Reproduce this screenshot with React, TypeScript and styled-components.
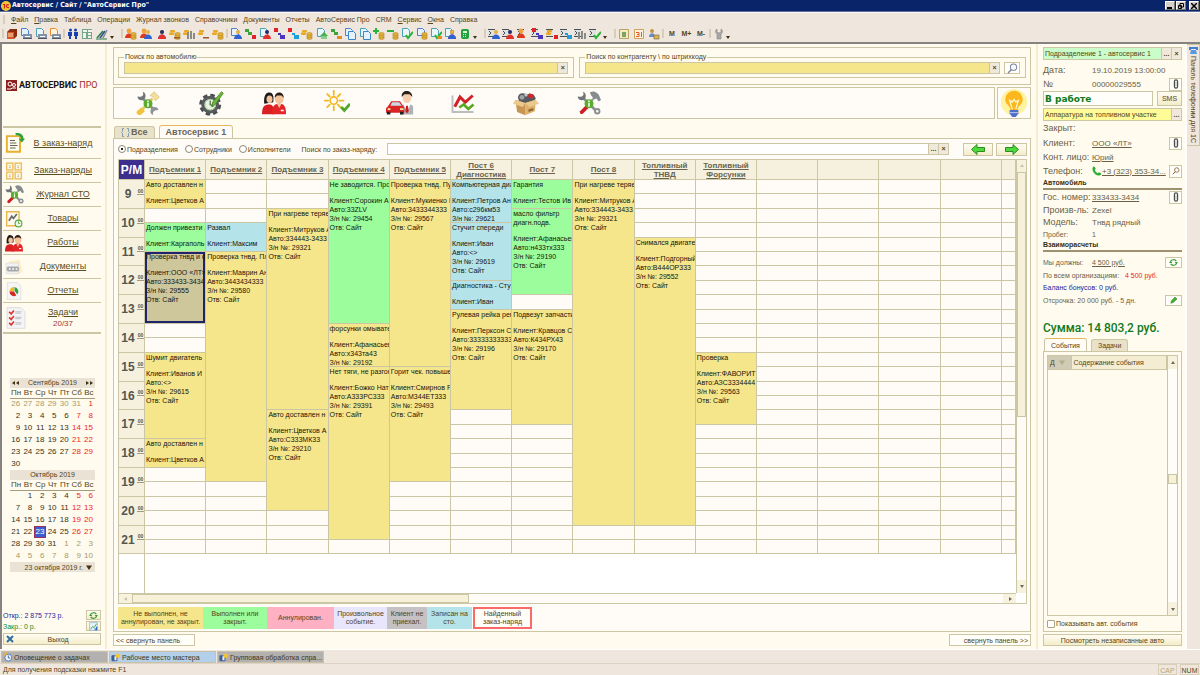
import React from "react";
import styled, { createGlobalStyle, css } from "styled-components";

const c = {
  page: "#fffbee",
  panel: "#fffcf7",
  chrome: "#efe6dd",
  line: "#cbc6a3",
  text: "#544417",
  soft: "#6b5f45",
  yellow: "#f6e68b",
  green: "#9bfd9b",
  blue: "#b4e3e9",
};

const GlobalStyle = createGlobalStyle`
  * { box-sizing: border-box; }
  body { margin: 0; font: 7px/9px "Liberation Sans", Arial, sans-serif; color: ${c.text}; background: ${c.chrome}; }
  button, input { font: inherit; color: inherit; margin: 0; padding: 0; border-radius: 0; }
  button { cursor: pointer; white-space: nowrap; }
  a { color: inherit; }
  svg { display: block; flex: none; }
`;

/* ---------- shell ---------- */

const Shell = styled.div`
  min-height: 100vh;
  display: flex;
  flex-direction: column;
`;

const TitleBar = styled.header`
  height: 12px;
  flex: none;
  display: flex;
  align-items: center;
  gap: 1px;
  padding: 0 1px;
  background: #0a246a;
  border-bottom: 1px solid #5f6f9c;
  color: #fff;
  font: bold 7px/9px "DejaVu Sans Condensed", "DejaVu Sans", sans-serif;
`;

const TitleText = styled.h1`
  margin: 0;
  flex: 1;
  font: inherit;
`;

const WindowButton = styled.button`
  width: 10px;
  height: 9px;
  border: 1px solid #fff;
  border-right-color: #777;
  border-bottom-color: #777;
  background: #d6d0c8;
  display: grid;
  place-items: center;
  &:last-child { margin-left: 2px; }
`;

const MenuBar = styled.nav`
  flex: none;
  height: 13px;
  display: flex;
  align-items: center;
  gap: 6px;
  padding: 1px 3px 0;
  border-top: 1px solid #fbf7f3;
`;

const MenuItem = styled.button`
  border: 0;
  background: none;
  line-height: 10px;
`;

const Grip = styled.span<{ $wide?: boolean }>`
  width: 2px;
  height: 9px;
  margin-left: ${(p) => (p.$wide ? 3 : 0)}px;
  background: #d8cdb8;
  flex: none;
`;

const ToolBar = styled.div`
  flex: none;
  height: 19px;
  display: flex;
  align-items: center;
  gap: 2px;
  padding: 0 2px;
  border-bottom: 2px solid #85827f;
`;

const ToolGroup = styled.div<{ $w: number }>`
  width: ${(p) => p.$w}px;
  flex: none;
  display: flex;
  align-items: center;
  justify-content: space-between;
  font-weight: bold;
`;

const ToolButton = styled.button`
  border: 0;
  background: none;
  min-width: 12px;
  height: 12px;
`;

const MoreButton = styled.button`
  border: 0;
  background: none;
  width: 6px;
  height: 10px;
  display: flex;
  align-items: flex-end;
`;

const Body = styled.div`
  flex: 1;
  display: flex;
  border-left: 2px solid #85827f;
`;

const Work = styled.div`
  flex: 1;
  min-width: 0;
  display: grid;
  grid-template-columns: 104px minmax(0, 1fr) 149px;
  background: ${c.page};
  border-right: 2px solid #fff;
`;

/* ---------- left column ---------- */

const Side = styled.aside`
  display: flex;
  flex-direction: column;
  padding: 0 4px 4px 1px;
  border-right: 1px solid #f3ecd2;
`;

const Logo = styled.div`
  height: 84px;
  display: flex;
  align-items: center;
  gap: 2px;
  padding-left: 3px;
  border-bottom: 2px solid ${c.line};
  font: bold 9px/14px Roboto, "Liberation Sans", sans-serif;
  white-space: nowrap;
  color: #1b1414;
`;

const LogoAccent = styled.span`
  font-weight: normal;
  color: #a12a2a;
`;

const NavItem = styled.a<{ $tall?: boolean }>`
  height: ${(p) => (p.$tall ? 31 : 24)}px;
  display: grid;
  grid-template-columns: 22px 1fr;
  align-items: center;
  padding-left: 2px;
  padding-right: 2px;
  border-bottom: 1px solid ${c.line};
  font-size: 9px;
  line-height: 11px;
  text-align: center;
  text-decoration: none;
  color: #5d4e22;
  &:last-child { border-bottom-width: 2px; }
`;

const NavLabel = styled.span`
  text-decoration: underline;
`;

const NavText = styled.span`
  display: flex;
  flex-direction: column;
`;

const NavCount = styled.span`
  font-size: 8px;
  color: #a33232;
`;

const Calendars = styled.div`
  margin: 44px 6px 0 7px;
`;

const CalTable = styled.table`
  width: 100%;
  table-layout: fixed;
  border-collapse: collapse;
  text-align: right;
  font-size: 8px;
  caption {
    height: 10px;
    line-height: 10px;
    background: #ebe2d6;
    font-size: 7px;
  }
  th {
    height: 10px;
    padding: 0;
    font-weight: normal;
    text-align: center;
    border-bottom: 1px solid #a89c7c;
  }
`;

const CalCaption = styled.span`
  display: flex;
  align-items: center;
  justify-content: space-between;
  padding: 0 2px;
`;

const CalStep = styled.button`
  border: 0;
  background: none;
  display: flex;
`;

const Day = styled.td<{ $kind: "plain" | "red" | "other" | "today" }>`
  height: 12px;
  padding: 0 2px 0 0;
  line-height: 10px;
  color: ${(p) => ({ plain: "#3c3215", red: "#ef1d1d", other: "#a89a68", today: "#fff" })[p.$kind]};
  ${(p) => p.$kind === "today" && css`background: #3d5ccf; box-shadow: inset 0 0 0 1px #98305c;`}
`;

const CalFooter = styled.button`
  width: 100%;
  height: 10px;
  border: 0;
  background: #ebe2d6;
  display: flex;
  align-items: center;
  justify-content: flex-end;
  gap: 3px;
  padding-right: 3px;
`;

const Totals = styled.div`
  margin-top: auto;
  display: grid;
  grid-template-columns: 1fr 15px;
  align-items: center;
  row-gap: 1px;
  margin-bottom: 2px;
`;

const Money = styled.span<{ $tone: string }>`
  color: ${(p) => p.$tone};
`;

const Push = styled.button<{ $h?: number; $w?: number; $align?: string }>`
  height: ${(p) => p.$h ?? 12}px;
  ${(p) => p.$w && css`width: ${p.$w}px;`}
  border: 1px solid ${c.line};
  background: linear-gradient(#fffdf3, #f4ecc9);
  display: flex;
  align-items: center;
  justify-content: ${(p) => p.$align ?? "center"};
  flex: none;
`;

const PlainPush = styled(Push)`
  background: #fffef8;
  padding: 0 2px;
`;

const ExitText = styled.span`
  flex: 1;
  text-align: center;
`;

/* ---------- centre ---------- */

const Center = styled.main`
  min-width: 0;
  display: flex;
  flex-direction: column;
  padding: 3px 5px 3px 6px;
  border-left: 1px solid #f3ecd2;
`;

const SearchPanel = styled.section`
  display: flex;
  gap: 5px;
  padding: 5px 4px 6px;
  height: 38px;
  flex: none;
  border: 1px solid ${c.line};
`;

const SearchSet = styled.fieldset<{ $grow: number }>`
  flex: ${(p) => p.$grow} 1 0;
  min-width: 0;
  margin: 0;
  padding: 1px 5px 2px;
  border: 1px solid ${c.line};
  legend {
    padding: 0 1px;
    line-height: 8px;
  }
`;

const Line = styled.div`
  display: flex;
  align-items: center;
  gap: 4px;
`;

const Field = styled.div<{ $fill?: string; $h?: number }>`
  flex: 1;
  min-width: 0;
  height: ${(p) => p.$h ?? 12}px;
  display: flex;
  border: 1px solid ${c.line};
  background: ${(p) => p.$fill ?? "#fff"};
`;

const FieldInput = styled.input<{ $big?: boolean }>`
  flex: 1;
  min-width: 0;
  border: 0;
  outline: 0;
  background: none;
  padding-left: 1px;
  ${(p) => p.$big && css`font: bold 9px/12px "DejaVu Sans", Verdana, sans-serif; color: #0c7a20;`}
`;

const FieldButton = styled.button`
  width: 10px;
  border: 0;
  border-left: 1px solid ${c.line};
  background: #efe8db;
  font-weight: bold;
  line-height: 8px;
`;

const ActionRow = styled.div`
  display: flex;
  gap: 2px;
  margin-top: 2px;
  height: 32px;
  flex: none;
`;

const Actions = styled.div`
  flex: 1;
  display: flex;
  align-items: center;
  gap: 39px;
  padding-left: 22px;
  border: 1px solid ${c.line};
  background: ${c.panel};
`;

const IconButton = styled.button`
  width: 24px;
  border: 0;
  background: none;
  display: flex;
  justify-content: center;
`;

const BulbButton = styled.button`
  width: 34px;
  border: 1px solid ${c.line};
  background: ${c.panel};
  display: grid;
  place-items: center;
`;

const Tabs = styled.div<{ $top: number }>`
  display: flex;
  align-items: flex-end;
  gap: 4px;
  padding-left: 1px;
  margin-top: ${(p) => p.$top}px;
  height: 13px;
  flex: none;
`;

const Tab = styled.button<{ $active?: boolean; $big?: boolean }>`
  height: ${(p) => (p.$active ? 14 : 12)}px;
  padding: 0 6px;
  margin-bottom: ${(p) => (p.$active ? -1 : 0)}px;
  display: flex;
  align-items: center;
  gap: 1px;
  border: 1px solid ${c.line};
  border-top: 1px solid ${(p) => (p.$active ? "#e5b75b" : c.line)};
  border-bottom: 0;
  border-radius: 3px 3px 0 0;
  background: ${(p) => (p.$active ? c.panel : "#e9e2c8")};
  ${(p) => p.$big && css`font-size: 9px; font-weight: bold; color: #6c6557;`}
`;

const Board = styled.section`
  flex: 1;
  display: flex;
  flex-direction: column;
  padding: 3px 3px 2px 4px;
  border: 1px solid ${c.line};
  background: ${c.panel};
`;

const Filters = styled.div`
  display: flex;
  align-items: center;
  gap: 7px;
  height: 14px;
  margin-bottom: 3px;
  flex: none;
`;

const Choice = styled.label`
  display: flex;
  align-items: center;
  gap: 1px;
`;

const Radio = styled.input`
  appearance: none;
  width: 8px;
  height: 8px;
  border: 1px solid #8d8871;
  border-radius: 50%;
  background: #fff;
  &:checked { background: radial-gradient(#222 0 25%, #fff 35%); }
`;

const Check = styled.input`
  appearance: none;
  width: 8px;
  height: 8px;
  border: 1px solid #a9a384;
  border-radius: 1px;
  background: #fff;
`;

const FindLabel = styled.label`
  padding: 0 3px 0 4px;
`;

const ArrowPair = styled.div`
  display: flex;
  gap: 3px;
  margin-left: 7px;
`;

const Viewport = styled.div`
  flex: 1;
  display: grid;
  grid-template-columns: minmax(0, 1fr) 10px;
  grid-template-rows: 1fr 10px;
  border: 1px solid ${c.line};
  background: #fff;
`;

const Sheet = styled.div`
  display: flex;
  flex-direction: column;
`;

const SheetTail = styled.div`
  flex: 1;
  width: 26px;
  border-right: 1px solid ${c.line};
`;

const Plan = styled.table`
  width: 100%;
  table-layout: fixed;
  border-collapse: separate;
  border-spacing: 0;
  background: ${c.panel};
  th, td { padding: 0; border-right: 1px solid ${c.line}; border-bottom: 1px solid ${c.line}; }
  tbody tr { height: 14px; }
  tbody tr:nth-child(5n + 2), tbody tr:nth-child(5n + 4) { height: 15px; }
`;

const PostHead = styled.th`
  height: 20px;
  background: #f5f1de;
  font-size: 8px;
  line-height: 9px;
  color: #6a6450;
  text-decoration: underline;
  white-space: pre-line;
  overflow: hidden;
`;

const Corner = styled.th`
  background: #3c2f8e;
  color: #fff;
  font-size: 12px;
  line-height: 14px;
`;

const HourHead = styled.th`
  background: #f5f1de;
  color: #56564f;
`;

const HourBox = styled.div`
  display: grid;
  grid-template-columns: 1fr 7px;
  align-items: center;
  height: 26px;
  font-size: 12px;
  line-height: 14px;
`;

const Minutes = styled.span`
  margin-bottom: 6px;
  border-bottom: 1px solid #a39c80;
  font-size: 5px;
  line-height: 6px;
`;

const Slot = styled.td<{ $tone: string; $found?: boolean }>`
  vertical-align: top;
  background: ${(p) => p.$tone};
  ${(p) => p.$found && css`box-shadow: inset 0 0 0 2px #20256a;`}
`;

const Order = styled.div<{ $span: number }>`
  height: ${(p) => Math.floor(p.$span * 14.4) - 1}px;
  overflow: hidden;
  padding-left: 1px;
  color: #17150c;
  line-height: 9px;
  white-space: pre;
`;

const OrderTitle = styled.p`
  margin: 0 0 7px;
`;

const VBar = styled.div`
  display: grid;
  grid-template-rows: 12px 6fr 4fr 13px;
  border-left: 1px solid ${c.line};
  background: ${c.panel};
`;

const HBar = styled.div`
  display: grid;
  grid-template-columns: 13px 335fr 530fr 13px;
  border-top: 1px solid ${c.line};
  background: ${c.panel};
`;

const Stepper = styled.button`
  border: 0;
  background: #f7f2de;
  display: grid;
  place-items: center;
`;

const Thumb = styled.div`
  border: 1px solid ${c.line};
  background: #f7f1da;
`;

const Legend = styled.ul`
  list-style: none;
  display: grid;
  grid-template-columns: 85px 64px 67px 53px 40px 45px 60px;
  height: 22px;
  margin: 3px 0 0;
  padding: 0;
  text-align: center;
  line-height: 8px;
`;

const LegendItem = styled.li<{ $tone: string; $found?: boolean }>`
  background: ${(p) => p.$tone};
  display: grid;
  place-items: center;
  white-space: pre-line;
  ${(p) => p.$found && css`border: 2px solid #f96b68; margin-left: 1px;`}
`;

const Spread = styled.div`
  display: flex;
  justify-content: space-between;
  margin-top: 2px;
`;

/* ---------- right column ---------- */

const Info = styled.aside`
  display: flex;
  flex-direction: column;
  padding: 3px 3px 3px 5px;
  border-left: 2px solid #f3ecd2;
`;

const InfoRow = styled.div<{ $h?: number; $small?: boolean }>`
  height: ${(p) => p.$h ?? 14}px;
  flex: none;
  display: flex;
  align-items: center;
  font-size: ${(p) => (p.$small ? 7 : 8)}px;
  line-height: 11px;
  color: ${c.soft};
  white-space: nowrap;
`;

const InfoKey = styled.span<{ $small?: boolean }>`
  width: 49px;
  flex: none;
  font-size: ${(p) => (p.$small ? 7 : 9)}px;
`;

const InfoValue = styled.span`
  flex: 1;
  min-width: 0;
  display: flex;
`;

const InfoHead = styled.h2`
  margin: 0;
  height: 12px;
  flex: none;
  border-bottom: 2px solid #9c9272;
  font-size: 7px;
  line-height: 9px;
  color: #3a2f10;
`;

const Gap = styled.div<{ $h: number }>`
  height: ${(p) => p.$h}px;
  flex: none;
`;

const Sum = styled.p`
  margin: 14px 0 0;
  font: 500 12px/14px Roboto, "Liberation Sans", sans-serif;
  color: #117a1d;
`;

const EventPanel = styled.section`
  flex: 1;
  display: flex;
  flex-direction: column;
  gap: 3px;
  padding: 3px;
  border: 1px solid ${c.line};
`;

const EventView = styled.div`
  flex: 1;
  display: grid;
  grid-template-columns: minmax(0, 1fr) 10px;
  border: 1px solid ${c.line};
`;

const EventTable = styled.table`
  width: 100%;
  border-collapse: collapse;
  align-self: start;
  th {
    height: 13px;
    padding: 0 2px;
    font-weight: normal;
    text-align: left;
    background: #f4ecd3;
    border-right: 1px solid ${c.line};
    border-bottom: 1px solid ${c.line};
  }
  th:first-child { width: 23px; background: #cfcbb4; }
`;

const SortHead = styled.span`
  display: flex;
  align-items: center;
  gap: 4px;
`;

const EventBar = styled.div`
  display: grid;
  grid-template-rows: 13px 104fr 10px 116fr 13px;
  border-left: 1px solid ${c.line};
  background: #fffdf8;
`;

const PhoneStrip = styled.div`
  width: 13px;
  flex: none;
`;

const PhoneTab = styled.button`
  width: 13px;
  padding: 1px 0 2px;
  border: 1px solid ${c.line};
  border-left: 0;
  background: #efe6dd;
  writing-mode: vertical-rl;
  display: flex;
  align-items: center;
  gap: 2px;
`;

/* ---------- bottom ---------- */

const WindowTabs = styled.nav`
  height: 14px;
  flex: none;
  display: flex;
  gap: 1px;
  padding: 1px 1px 0;
  border-top: 1px solid #fff;
`;

const WindowTab = styled.button<{ $active?: boolean }>`
  width: 107px;
  height: 12px;
  border: 1px solid #c8c2a8;
  background: ${(p) => (p.$active ? "#b3cfe9" : "#b3b0b0")};
  display: flex;
  align-items: center;
  gap: 1px;
  padding-left: 1px;
  color: #3d3822;
`;

const Status = styled.footer`
  height: 12px;
  flex: none;
  display: flex;
  align-items: center;
  gap: 3px;
  padding: 0 1px 0 3px;
  border-top: 1px solid #ddd2c4;
`;

const StatusText = styled.span`
  flex: 1;
`;

const StatusKey = styled.span<{ $off?: boolean }>`
  width: 19px;
  height: 11px;
  line-height: 11px;
  border: 1px solid #d9cfb8;
  text-align: center;
  color: ${(p) => (p.$off ? "#b3a67c" : c.text)};
`;

/* ---------- drawings ---------- */

const parts: Record<string, React.ReactNode> = {
  book: <g><path d="M1 4 4 1h7v7l-3 3H1z" fill="#8d2a12" /><path d="M1 4h7v7H1z" fill="#d55628" /><path d="M2 6h5M2 8h5" stroke="#ffe1a8" /></g>,
  docBlue: <path d="M1.5 .5h5l2 2v5h-7z" fill="#e5f0ff" stroke="#4f7fd0" />,
  docTeal: <path d="M1.5 .5h5l2 2v6h-7z" fill="#e9f7fb" stroke="#4aa0b8" />,
  docOrange: <path d="M1.5 .5h5l2 2v5h-7z" fill="#fff3dc" stroke="#e88a2e" />,
  printer: <g><path d="M3 6h9v5H3z" fill="#8492a8" /><path d="M5 8h5v1H5z" fill="#fff" /><path d="M3 10h9v1H3z" fill="#4b5668" /></g>,
  pair: <g fill="#1c3fae"><circle cx="3.5" cy="2" r="1.5" /><circle cx="8.5" cy="2" r="1.5" /><path d="M1 4h4v4H4v3H2V8H1zM7 4h4v4h-1v3H8V8H7z" /></g>,
  table: <g><path d="M1 1h10v10H1z" fill="#77a58a" /><path d="M2 2h4v2H2zM7 2h4v2H7zM2 5h3v5H2zM7 5h3v2H7zM7 8h3v2H7z" fill="#eef6ee" /></g>,
  pens: <g strokeWidth="1.6" fill="none"><path d="M1 10 7 3" stroke="#2a7d4a" /><path d="M4 10 9 3" stroke="#394c8d" /><path d="M7 10 11 2" stroke="#7a8a99" /><path d="M0 11h11" stroke="#2a7d4a" strokeWidth="1" /></g>,
  manRed: <g><circle cx="4" cy="3" r="2.4" fill="#f0a03c" /><path d="M0 10c0-6 8-6 8 0z" fill="#df3a1c" /></g>,
  manBlue: <g><circle cx="8" cy="4" r="2" fill="#e8b23c" /><path d="M4 11c0-6 8-6 8 0z" fill="#2f62d3" /></g>,
  manRed2: <g><circle cx="8" cy="4" r="2" fill="#222d6a" /><path d="M4 11c0-6 8-6 8 0z" fill="#e3302c" /></g>,
  gold: <g fill="#e9a820"><rect x="1" y="2" width="5" height="2.4" rx="1" /><rect x="0" y="4.6" width="5" height="2.4" rx="1" /></g>,
  coins: <g fill="#e6b53c" stroke="#a8781b" strokeWidth=".5"><ellipse cx="8.500" cy="10" rx="2.800" ry="1.400" /><ellipse cx="8.500" cy="8" rx="2.800" ry="1.400" /><ellipse cx="8.500" cy="6" rx="2.800" ry="1.400" /></g>,
  bars: <path d="M4 4h2v7H4zM7 3h2v8H7zM10 5h2v6h-2z" fill="#888c84" />,
  dash: <path d="M5 9h6v1.500H5z" fill="#9a5a30" />,
  sqGreen: <path d="M1 1h4v3H1zM4 4h4v3H4z" fill="#3da23d" />,
  sqRed: <path d="M8 7h4v4H8z" fill="#e0222b" />,
  sqRedTop: <path d="M1 0h4v4H1z" fill="#e0222b" />,
  sqViolet: <path d="M5 5h3v2H5zM7 7h5v4H7z" fill="#4a35c0" />,
  sqCyan: <path d="M5 5h3v2H5zM7 7h5v4H7z" fill="#1f9fdc" />,
  sqOrange: <path d="M7 8h5v3H7z" fill="#e68a22" />,
  home: <g><path d="M4 8 8 4l4 4z" fill="#49b04d" /><path d="M5 8h6v3H5z" fill="#84cf84" /></g>,
  copy: <path d="M4.500 3.500h5l2 2v6h-7z" fill="#e2f3ff" stroke="#3b86c9" />,
  plus: <path d="M2 0h2v2h2v2H4v2H2V4H0V2h2z" fill="#29b338" />,
  minus: <path d="M0 2h7v2H0z" fill="#29b338" />,
  check: <path d="m5 7 2 3 5-6" fill="none" stroke="#27b53a" strokeWidth="2" />,
  phone: <g><rect x="2" y="1" width="8" height="10" rx="2" fill="#22a33d" /><path d="M4 3h4v2H4zM4 6h1v1H4zM6 6h1v1H6zM4 8h1v1H4zM6 8h1v1H6z" fill="#d9f6da" /></g>,
  list: <g><path d="M0 1h7v8H0z" fill="#e1e1e1" /><path d="M0 1.500h7M1 3l2 2-2 2M0 8.500h7" fill="none" stroke="#4b5050" /></g>,
  note: <g><path d="M1.500 1.500h9v9h-9z" fill="#f6eab8" stroke="#b5a568" /><path d="M4 4h4v5H4z" fill="#7ba36b" /></g>,
  date: <g><path d="M1.500 1.500h9v9h-9z" fill="#fff2dc" stroke="#d2a25c" /><path d="M3 4.500h3v2H4M6 6.500v2H3M8.500 4v5" fill="none" stroke="#e05a2a" /></g>,
  lock: <g><circle cx="4" cy="3" r="2" fill="#c9953c" /><path d="M1 9c0-5 6-5 6 0z" fill="#6d8bc4" /><rect x="6" y="7" width="5" height="4" fill="#ddb24a" stroke="#555" strokeWidth=".5" /></g>,
  wrench: <path d="M4 1v3l2 1 2-1V1c2 1 2 4 0 5v5H4V6C2 5 2 2 4 1z" fill="#a6a8a6" stroke="#7c7f7c" strokeWidth=".5" />,
};

const Tool = ({ k }: { k: string }) => (
  <ToolButton aria-label={k}>
    <svg width="12" height="12" viewBox="0 0 12 12">
      {k.split("+").map((p) => <React.Fragment key={p}>{parts[p]}</React.Fragment>)}
    </svg>
  </ToolButton>
);

const Tri = ({ d = "down", s = 4, fill = "#6d6a55" }: { d?: "down" | "up" | "left" | "right"; s?: number; fill?: string }) => (
  <svg width={s} height={s} viewBox="0 0 4 4">
    <path fill={fill} d={{ down: "M0 1h4L2 4z", up: "M0 3h4L2 0z", left: "M3 0v4L0 2z", right: "M1 0v4l3-2z" }[d]} />
  </svg>
);

const More = () => (
  <MoreButton aria-label="Ещё"><Tri fill="#3e3210" /></MoreButton>
);

const Svg = ({ s, children }: { s: number; children: React.ReactNode }) => (
  <svg width={s} height={s} viewBox="0 0 32 32">{children}</svg>
);

const InfoDot = () => (
  <g>
    <circle cx="16" cy="17" r="6" fill="#58ad2b" />
    <path d="M15 15.500h2V21h-2zM15 12.500h2v2h-2z" fill="#fff" />
  </g>
);

const Repair = ({ s = 24 }) => (
  <Svg s={s}>
    <path d="M8 9 25 26" stroke="#8a8f92" strokeWidth="3.500" />
    <path d="M2 7c0 5 5 7 9 4 3-3 2-9-2-10 1 3 1 5-1 6S4 8 2 7z" fill="#6f7579" />
    <path d="M30 25c-1-4-6-5-9-2s-2 8 2 9c-1-3 0-5 2-6s3 0 5-1z" fill="#8e9498" />
    <path d="M8 25 22 10" stroke="#e5c870" strokeWidth="4" />
    <path d="m19 6 5-5 7 7-5 5c-1-3-4-6-7-7z" fill="#f1dfa2" stroke="#d9bd6a" />
    <path d="m1 27 6-5 5 5-6 5c-4 0-6-2-5-5z" fill="#f0c23e" />
    <InfoDot />
  </Svg>
);

const Hammer = ({ s = 24 }) => (
  <Svg s={s}>
    <path d="M8 9 25 26" stroke="#8a8f92" strokeWidth="3.500" />
    <path d="M1 7c0 5 5 7 9 4 3-3 2-9-2-10 1 3 1 5-1 6S3 8 1 7z" fill="#6f7579" />
    <circle cx="27" cy="27" r="3" fill="none" stroke="#8a8f92" strokeWidth="2.500" />
    <path d="M24 8 13 20" stroke="#9aa0a4" strokeWidth="3" />
    <path d="m12 19-8 8c-1 3 2 5 4 3l8-8z" fill="#cf1d24" />
    <path d="M17 2c5-3 9-1 12 3l3 7-3 2-3-4-3 1-4-5z" fill="#868c90" />
    <InfoDot />
  </Svg>
);

const GearClock = () => (
  <Svg s={26}>
    <circle cx="15" cy="18" r="11.500" fill="none" stroke="#4a4e50" strokeWidth="4" strokeDasharray="5.400 3.600" />
    <circle cx="15" cy="18" r="9" fill="#fff" stroke="#575b5e" strokeWidth="4" />
    <circle cx="15" cy="18" r="6.500" fill="#eaf3e4" stroke="#8fbf76" />
    <path d="M15 13v5l4 2" fill="none" stroke="#44713b" strokeWidth="1.500" />
    <path d="m17 21 1-6L29 2l2 2-9 13z" fill="#6cb63a" stroke="#467f22" />
  </Svg>
);

const People = ({ s = 24 }) => (
  <Svg s={s}>
    <path d="M3 17C2 5 6 1 10 2c5 0 6 6 5 13z" fill="#1f1a1a" />
    <ellipse cx="10" cy="11" rx="4" ry="5" fill="#f4c39a" />
    <path d="M0 31c0-10 3-13 10-13 4 0 6 3 6 13z" fill="#d81f23" />
    <ellipse cx="23" cy="10" rx="6" ry="7" fill="#f4c39a" />
    <path d="M17 9c-1-9 12-10 12 0l-3-3h-6z" fill="#2a1c16" />
    <path d="M13 31c0-10 3-14 10-14s9 4 9 14z" fill="#e32528" />
    <path d="m20 17 3 6 3-6z" fill="#f4c39a" />
    <path d="M25 25h4v2h-4z" fill="#fff" />
  </Svg>
);

const SunCheck = () => (
  <Svg s={26}>
    <g stroke="#f3b71f" strokeWidth="2.200" strokeLinecap="round">
      <path d="M12 1v5M12 20v5M1 13h4M19 13h5M4 5l3 3M17 18l3 3M20 5l-3 3M7 18l-3 3" />
    </g>
    <circle cx="12" cy="13" r="4.500" fill="none" stroke="#f3b71f" strokeWidth="2" />
    <path d="m21 21 4 4 7-8" fill="none" stroke="#4fa62a" strokeWidth="3.500" />
  </Svg>
);

const CarMan = () => (
  <Svg s={28}>
    <path d="M16 29V21c2-5 15-5 15 0v8z" fill="#aeb1b5" />
    <path d="m20 17 4 10 4-10z" fill="#fff" />
    <path d="m23 19-1 6 2 3 2-3-1-6z" fill="#c91e22" />
    <ellipse cx="24" cy="10" rx="5" ry="6" fill="#f6cfae" />
    <path d="M18 9c-1-9 12-9 12 0l-3-3h-6z" fill="#2b211d" />
    <path d="m2 20 4-6h10l4 6 1 2v5H0v-5z" fill="#da2527" />
    <path d="m5 19 2-4h8l3 4z" fill="#c9dbe7" />
    <path d="M1 26h4v3H1zM16 26h4v3h-4z" fill="#222" />
    <path d="M2 22h3v2H2zM16 22h4v2h-4z" fill="#ffe6a0" />
  </Svg>
);

const Trend = () => (
  <Svg s={24}>
    <path d="M2 6v22h28" fill="none" stroke="#bcbfc0" strokeWidth="2.500" />
    <path d="m5 21 7-13 7 7 10-9" fill="none" stroke="#d32128" strokeWidth="4" />
    <path d="m11 22 6-4 6 6 7-6" fill="none" stroke="#5aa61f" strokeWidth="3.500" />
  </Svg>
);

const PartsBox = () => (
  <Svg s={26}>
    <path d="M6 9c2-7 7-5 10-4s8-4 12 5l-3 6H8z" fill="#56595d" />
    <circle cx="11" cy="9" r="3" fill="#9fa3a8" />
    <circle cx="16" cy="6" r="2" fill="#c8cbce" />
    <path d="m20 4 6 2-3 5-5-3z" fill="#d1292c" />
    <path d="m3 12 12 4v15L5 27z" fill="#c99552" />
    <path d="m15 16 13-4-1 14-12 5z" fill="#ddb06c" />
    <path d="m3 12-3 5 12 4 3-5zM28 12l4 5-12 4-5-5z" fill="#ebc88d" />
    <path d="m19 24 6-2v3l-6 2z" fill="#8e6634" />
  </Svg>
);

const Bulb = () => (
  <Svg s={28}>
    <circle cx="16" cy="15" r="15" fill="#fdf3a0" />
    <path d="M12 24c0-5-6-6-6-12a10 10 0 0 1 20 0c0 6-6 7-6 12z" fill="#fdb71d" />
    <path d="m14 23-3-10 3 2 2-3 2 3 3-2-3 10" fill="none" stroke="#fff6c9" strokeWidth="1.500" />
    <path d="M11 24h10v4l-3 4h-4l-3-4z" fill="#4d6fca" />
    <path d="M11 27h10" stroke="#c9d5f5" />
  </Svg>
);

const SheetReturn = () => (
  <Svg s={20}>
    <path d="M3 5h21v25H3z" fill="#fffdf2" stroke="#e8ae2e" strokeWidth="3" />
    <path d="M8 12h8M8 16h10M8 20h12M8 24h9" stroke="#5e5a4a" strokeWidth="1.500" />
    <path d="M17 2c6-1 11 2 11 8" fill="none" stroke="#2ca03a" strokeWidth="4" />
    <path d="m22 9 10 0-5 6z" fill="#2ca03a" />
  </Svg>
);

const Orders = () => (
  <Svg s={18}>
    {[[2, 1], [17, 1], [2, 17], [17, 17]].map(([x, y]) => (
      <g key={`${x}-${y}`}>
        <rect x={x + 1} y={y + 1} width="11" height="12" fill="#fffaea" stroke="#ecbf5c" strokeWidth="2.500" />
        <path d={`M${x + 5} ${y + 6}h3M${x + 5} ${y + 9}h3`} stroke="#9b9274" strokeWidth="1.200" />
      </g>
    ))}
  </Svg>
);

const Goods = () => (
  <Svg s={18}>
    <path d="M3 3h22v25H3z" fill="#fffaf0" stroke="#eab84c" strokeWidth="2.500" />
    <path d="m7 19 5-8 3 4 6-8" fill="none" stroke="#666" strokeWidth="3" />
    <circle cx="24" cy="24" r="6" fill="#f1fbea" stroke="#57a542" strokeWidth="2" />
    <path d="M24 20v4h3" fill="none" stroke="#57a542" strokeWidth="1.500" />
  </Svg>
);

const Papers = () => (
  <Svg s={18}>
    <path d="m6 6 20-3 5 22-8 4z" fill="#fbeec5" />
    <path d="M2 9h22v19H2z" fill="#f1f1f1" stroke="#d2d2d2" />
    <rect x="3" y="15" width="22" height="9" rx="3" fill="#a6a8aa" />
    <path d="M7 18h3v3H7zM13 18h3v3h-3zM19 18h3v3h-3z" fill="#fff" />
  </Svg>
);

const Report = () => (
  <Svg s={18}>
    <path d="M4 1h18l6 6v24H4z" fill="#f5f5f5" stroke="#d5d5d5" />
    <path d="M16 17V9a8 8 0 0 0-8 8z" fill="#f4b51f" />
    <path d="M16 17H8a8 8 0 0 0 12 7z" fill="#d22627" />
    <path d="M17 16V9a8 8 0 0 1 5 13z" fill="#2fa03b" />
  </Svg>
);

const Tasks = () => (
  <Svg s={22}>
    <path d="M3 1h20l6 6v24H3z" fill="#f4f4f6" stroke="#d2d2d6" />
    {[5, 13, 21].map((y) => (
      <g key={y}>
        <path d={`m6 ${y + 2} 3 3 4-5`} fill="none" stroke="#e03b3b" strokeWidth="2.500" />
        <path d={`M15 ${y + 2}h9M15 ${y + 4}h8`} stroke="#a9abb2" />
      </g>
    ))}
  </Svg>
);

const Lens = ({ s = 11, tone = "#7b82a0" }) => (
  <Svg s={s}>
    <circle cx="19" cy="12" r="9" fill="#f8fbff" stroke={tone} strokeWidth="3" />
    <path d="m13 19-10 10" stroke={tone} strokeWidth="4" />
  </Svg>
);

const Clip = () => (
  <Svg s={10}>
    <rect x="11" y="3" width="10" height="26" rx="5" fill="none" stroke="#4d4d4d" strokeWidth="4" />
    <path d="M16 9v15" stroke="#999" strokeWidth="2" />
  </Svg>
);

const BigArrow = ({ flip = false }) => (
  <svg width="14" height="11" viewBox="0 0 14 11">
    <path d={flip ? "M13.500 5.500 8 .5v3H.5v4H8v3z" : "M.5 5.500 6 .5v3h7.500v4H6v3z"} fill="#4fd83c" stroke="#2b8b22" />
  </svg>
);

const Refresh = () => (
  <Svg s={9}>
    <path d="M5 14c2-9 16-11 21-3M27 18c-2 9-16 11-21 3" fill="none" stroke="#3a9a35" strokeWidth="4" />
    <path d="M20 14h12l-6 7zM0 18h12L6 10z" fill="#3a9a35" />
  </Svg>
);

const Pencil = () => (
  <Svg s={8}>
    <path d="m3 29 3-10L20 4l8 8-15 14z" fill="#45b02e" stroke="#24761a" strokeWidth="2" />
  </Svg>
);

const Handset = () => (
  <Svg s={10}>
    <path d="M3 3c4-4 7 0 9 6l-3 4c2 5 5 8 9 10l4-3c6 2 10 6 6 9-12 7-32-12-25-26z" fill="#2fae35" />
  </Svg>
);

const WindowIcon = () => (
  <Svg s={10}>
    <path d="M3 12h16v16H3z" fill="#eef3fb" stroke="#3c5c94" strokeWidth="3" />
    <path d="M3 12h8v16H3z" fill="#3c5c94" />
    <path d="m21 1 3 6 7 1-5 5 1 7-6-3-6 3 1-7-5-5 7-1z" fill="#f8c52c" />
  </Svg>
);

const AlarmIcon = () => (
  <Svg s={10}>
    <circle cx="17" cy="18" r="11" fill="#eaf4ff" stroke="#4e7fc0" strokeWidth="3" />
    <path d="M17 11v8h6" fill="none" stroke="#2c4c7d" strokeWidth="2.500" />
    <path d="m2 8 8-7 4 5-8 7z" fill="#f3ad34" />
  </Svg>
);

const ChartIcon = () => (
  <Svg s={9}>
    <path d="M2 2h28v28H2z" fill="#e6f1fb" stroke="#83a8c8" strokeWidth="2" />
    <path d="m5 26 8-10 5 4 9-14" fill="none" stroke="#2e9d44" strokeWidth="3" />
    <path d="M20 22h4v7h-4zM25 17h4v12h-4z" fill="#2c62c4" />
  </Svg>
);

/* ---------- data ---------- */

interface Booking {
  start: number;
  span: number;
  tone: string;
  title: string;
  lines: string[];
  found?: boolean;
}

const b = (start: number, span: number, tone: string, title: string, lines: string[], found?: boolean): Booking =>
  ({ start, span, tone, title, lines, found });

const own = "Отв: Сайт";

const posts: { name: string; items: Booking[] }[] = [
  { name: "Подъемник 1", items: [
    b(0, 2, c.yellow, "Авто доставлен н", ["Клиент:Цветков А"]),
    b(3, 2, c.green, "Должен привезти ,", ["Клиент:Каргаполь"]),
    b(5, 5, "#cfc79c", "Проверка тнвд и ф", ["Клиент:ООО «ЛТ»", "Авто:333433-3434", "З/н №: 29555", own], true),
    b(12, 6, c.yellow, "Шумит двигатель", ["Клиент:Иванов И", "Авто:<>", "З/н №: 29615", own]),
    b(18, 2, c.yellow, "Авто доставлен н", ["Клиент:Цветков А"]),
  ] },
  { name: "Подъемник 2", items: [
    b(3, 2, c.blue, "Развал", ["Клиент:Максим"]),
    b(5, 16, c.yellow, "Проверка тнвд. Пл", ["Клиент:Маврин Ан", "Авто:3443434333", "З/н №: 29580", own]),
  ] },
  { name: "Подъемник 3", items: [
    b(2, 14, c.yellow, "При нагреве теряе", ["Клиент:Митруков А", "Авто:334443-3433", "З/н №: 29321", own]),
    b(16, 7, c.yellow, "Авто доставлен н", ["Клиент:Цветков А", "Авто:С333МК33", "З/н №: 29210", own]),
  ] },
  { name: "Подъемник 4", items: [
    b(0, 10, c.green, "Не заводится. Про", ["Клиент:Сорокин А", "Авто:33ZLV", "З/н №: 29454", own]),
    b(10, 3, c.yellow, "форсунки омывате", ["Клиент:Афанасьев", "Авто:х343та43", "З/н №: 29192"]),
    b(13, 12, c.yellow, "Нет тяги, не разгон", ["Клиент:Божко Нат", "Авто:А333РС333", "З/н №: 29391", own]),
  ] },
  { name: "Подъемник 5", items: [
    b(0, 13, c.yellow, "Проверка тнвд. Пу", ["Клиент:Мукиенко Н", "Авто:3433344333", "З/н №: 29567", own]),
    b(13, 8, c.yellow, "Горит чек. повыше", ["Клиент:Смирнов Р", "Авто:М344ЕТ333", "З/н №: 29493", own]),
  ] },
  { name: "Пост 6\nДиагностика", items: [
    b(0, 3, c.blue, "Компьютерная диа", ["Клиент:Петров Ан", "Авто:с296км53", "З/н №: 29621"]),
    b(3, 4, c.blue, "Стучит спереди", ["Клиент:Иван", "Авто:<>", "З/н №: 29619", own]),
    b(7, 2, c.blue, "Диагностика - Стуч", ["Клиент:Иван"]),
    b(9, 7, c.yellow, "Рулевая рейка рем", ["Клиент:Перксон Се", "Авто:33333333333", "З/н №: 29196", own]),
  ] },
  { name: "Пост 7", items: [
    b(0, 2, c.green, "Гарантия", ["Клиент:Тестов Ив"]),
    b(2, 6, c.green, "масло фильтр\nдиагн.подв.", ["Клиент:Афанасьев", "Авто:н433тх333", "З/н №: 29190", own]),
    b(9, 8, c.yellow, "Подвезут запчасти", ["Клиент:Кравцов С", "Авто:К434РХ43", "З/н №: 29170", own]),
  ] },
  { name: "Пост 8", items: [
    b(0, 24, c.yellow, "При нагреве теряе", ["Клиент:Митруков А", "Авто:334443-3433", "З/н №: 29321", own]),
  ] },
  { name: "Топливный\nТНВД", items: [
    b(4, 20, c.yellow, "Снимался двигате", ["Клиент:Подгорный", "Авто:В444ОР333", "З/н №: 29552", own]),
  ] },
  { name: "Топливный\nФорсунки", items: [
    b(12, 5, c.yellow, "Проверка", ["Клиент:ФАВОРИТ", "Авто:АЗС3334444", "З/н №: 29563", own]),
  ] },
  { name: "", items: [] }, { name: "", items: [] }, { name: "", items: [] }, { name: "", items: [] }, { name: "", items: [] },
];

const menu: [string, string][] = [
  ["Ф", "айл"], ["П", "равка"], ["", "Таблица"], ["", "Операции"], ["", "Журнал звонков"], ["", "Справочники"],
  ["", "Документы"], ["", "Отчеты"], ["", "АвтоСервис Про"], ["", "CRM"], ["С", "ервис"], ["О", "кна"], ["", "Справка"],
];

const toolsMain = ["docBlue+manBlue", "sqGreen+sqRed", "docTeal+manRed2", "sqRedTop+sqViolet", "sqRedTop+sqCyan", "gold+coins",
  "docTeal+home", "sqGreen+sqOrange", "docBlue+copy", "docTeal+copy", "plus+coins", "minus+coins", "docTeal+check",
  "docBlue+coins", "docTeal+check+sqOrange", "docTeal+manRed2+manBlue", "phone"];
const toolsPeople = ["manRed+coins", "manRed+manBlue", "manBlue+manRed2", "gold+coins+dash", "gold+bars", "gold+dash", "gold+coins"];
const toolsReports = ["list+manBlue", "list+manRed2", "list+manRed", "list+sqRedTop+sqViolet", "list+sqRed+gold", "list+sqRed+sqCyan", "list+bars", "list+check"];

const nav: [string, React.ReactNode][] = [
  ["В заказ-наряд", <SheetReturn />], ["Заказ-наряды", <Orders />], ["Журнал СТО", <Hammer s={19} />], ["Товары", <Goods />],
  ["Работы", <People s={18} />], ["Документы", <Papers />], ["Отчеты", <Report />],
];

const actions: [string, React.ReactNode][] = [
  ["Ремонт", <Repair />], ["График", <GearClock />], ["Сотрудники", <People />], ["Сезон", <SunCheck />],
  ["Клиент", <CarMan />], ["Показатели", <Trend />], ["Склад", <PartsBox />], ["Журнал СТО", <Hammer />],
];

const legend: [string, string][] = [
  ["Не выполнен, не\nаннулирован, не закрыт.", c.yellow], ["Выполнен или\nзакрыт.", c.green], ["Аннулирован.", "#ffb1c3"],
  ["Произвольное\nсобытие.", "#e7e6fd"], ["Клиент не\nприехал.", "#c5c1c4"], ["Записан на\nсто.", c.blue],
];

const weekdays = ["Пн", "Вт", "Ср", "Чт", "Пт", "Сб", "Вс"];

/* ---------- pieces ---------- */

interface MonthProps {
  title: string;
  before: (number | null)[];
  days: number;
  after: number;
  today?: number;
  arrows?: boolean;
}

const Month = ({ title, before, days, after, today, arrows }: MonthProps) => {
  const cells: { n: number | null; other: boolean }[] = [
    ...before.map((n) => ({ n, other: true })),
    ...Array.from({ length: days }, (_, i) => ({ n: i + 1, other: false })),
    ...Array.from({ length: after }, (_, i) => ({ n: i + 1, other: true })),
  ];
  const weeks = Array.from({ length: Math.ceil(cells.length / 7) }, (_, i) => cells.slice(i * 7, i * 7 + 7));
  return (
    <CalTable>
      <caption>
        {arrows ? (
          <CalCaption>
            <CalStep aria-label="Предыдущий месяц"><Tri d="left" fill="#3e3210" /><Tri d="left" fill="#3e3210" /></CalStep>
            {title}
            <CalStep aria-label="Следующий месяц"><Tri d="right" fill="#3e3210" /><Tri d="right" fill="#3e3210" /></CalStep>
          </CalCaption>
        ) : title}
      </caption>
      <thead><tr>{weekdays.map((d) => <th key={d}>{d}</th>)}</tr></thead>
      <tbody>
        {weeks.map((w, i) => (
          <tr key={i}>
            {w.map((d, j) => (
              <Day key={j} $kind={d.other ? "other" : d.n === today ? "today" : j > 4 ? "red" : "plain"}>{d.n}</Day>
            ))}
          </tr>
        ))}
      </tbody>
    </CalTable>
  );
};

const Schedule = () => (
  <Plan>
    <colgroup>
      <col width={26} />
      {posts.slice(0, -1).map((_, i) => <col key={i} />)}
      <col width={14} />
    </colgroup>
    <thead>
      <tr>
        <Corner>Р/М</Corner>
        {posts.map((p, i) => <PostHead key={i}>{p.name}</PostHead>)}
      </tr>
    </thead>
    <tbody>
      {Array.from({ length: 26 }, (_, row) => (
        <tr key={row}>
          {row % 2 === 0 && (
            <HourHead rowSpan={2}>
              <HourBox>{9 + row / 2}<Minutes>00</Minutes></HourBox>
            </HourHead>
          )}
          {posts.map((post, i) => {
            const hit = post.items.find((x) => row >= x.start && row < x.start + x.span);
            if (!hit) return <td key={i} />;
            if (hit.start !== row) return null;
            return (
              <Slot key={i} rowSpan={hit.span} $tone={hit.tone} $found={hit.found}>
                <Order $span={hit.span}>
                  <OrderTitle>{hit.title}</OrderTitle>
                  {hit.lines.map((l) => <div key={l}>{l}</div>)}
                </Order>
              </Slot>
            );
          })}
        </tr>
      ))}
    </tbody>
  </Plan>
);

const Attach = () => <PlainPush $h={13} $w={13} aria-label="Файлы"><Clip /></PlainPush>;

export default function App() {
  return (
    <Shell>
      <GlobalStyle />
      <TitleBar>
        <svg width="10" height="10" viewBox="0 0 10 10">
          <circle cx="5" cy="5" r="5" fill="#f3c531" /><path d="M2 3.500h1.500v4M8 4C5 2.500 4 7 8 6.500" stroke="#d5231c" strokeWidth="1.200" fill="none" />
        </svg>
        <TitleText>Автосервис / Сайт / "АвтоСервис Про"</TitleText>
        <WindowButton aria-label="Свернуть"><svg width="6" height="6"><path d="M0 5h5" stroke="#000" strokeWidth="2" /></svg></WindowButton>
        <WindowButton aria-label="Восстановить"><svg width="6" height="6"><path d="M2 .5h3.500V4H2zM.5 2.500h3v3h-3z" fill="none" stroke="#000" /></svg></WindowButton>
        <WindowButton aria-label="Закрыть"><svg width="6" height="6"><path d="m0 0 6 6M6 0 0 6" stroke="#000" strokeWidth="1.500" /></svg></WindowButton>
      </TitleBar>
      <MenuBar>
        <Grip />
        {menu.map(([u, rest]) => <MenuItem key={rest}>{u && <u>{u}</u>}{rest}</MenuItem>)}
      </MenuBar>
      <ToolBar>
        <Grip />
        <ToolGroup $w={55}><Tool k="book" /><Tool k="docBlue+printer" /><Tool k="docTeal+printer" /><Tool k="docOrange+printer" /></ToolGroup>
        <Grip />
        <ToolGroup $w={49}><Tool k="pair" /><Tool k="table" /><Tool k="pens" /><More /></ToolGroup>
        <Grip $wide />
        <ToolGroup $w={99}>{toolsPeople.map((k) => <Tool key={k} k={k} />)}</ToolGroup>
        <Grip />
        <ToolGroup $w={249}>{toolsMain.map((k) => <Tool key={k} k={k} />)}<More /></ToolGroup>
        <Grip $wide />
        <ToolGroup $w={121}>{toolsReports.map((k) => <Tool key={k} k={k} />)}<More /></ToolGroup>
        <Grip $wide />
        <ToolGroup $w={42}><Tool k="note" /><Tool k="date" /><Tool k="lock" /></ToolGroup>
        <Grip />
        <ToolGroup $w={41}><ToolButton>M</ToolButton><ToolButton>M+</ToolButton><ToolButton>M-</ToolButton></ToolGroup>
        <Grip />
        <ToolGroup $w={19}><Tool k="wrench" /><More /></ToolGroup>
      </ToolBar>

      <Body>
        <Work>
          <Side>
            <Logo>
              <svg width="11" height="11" viewBox="0 0 11 11">
                <path d="M0 0h11v11H0z" fill="#8c2020" />
                <circle cx="4" cy="4" r="2" fill="none" stroke="#fff" /><circle cx="8" cy="5" r="1.500" fill="none" stroke="#fff" />
                <path d="M1 9h4l1-1h4" stroke="#fff" fill="none" />
              </svg>
              <span>АВТОСЕРВИС <LogoAccent>ПРО</LogoAccent></span>
            </Logo>
            <nav>
              {nav.map(([label, icon], i) => (
                <NavItem key={label} href="#" $tall={i === 0}>{icon}<NavLabel>{label}</NavLabel></NavItem>
              ))}
              <NavItem href="#" $tall><Tasks /><NavText><NavLabel>Задачи</NavLabel><NavCount>20/37</NavCount></NavText></NavItem>
            </nav>
            <Calendars>
              <Month title="Сентябрь 2019" before={[26, 27, 28, 29, 30, 31]} days={30} after={0} arrows />
              <Month title="Октябрь 2019" before={[null]} days={31} after={10} today={23} />
              <CalFooter>23 октября 2019 г.<Tri s={6} fill="#3e3210" /></CalFooter>
            </Calendars>
            <Totals>
              <Money $tone="#1c1c9c">Откр.: 2 875 773 р.</Money><Push $h={10} $w={15} aria-label="Обновить"><Refresh /></Push>
              <Money $tone="#128a2b">Закр.: 0 р.</Money><Push $h={10} $w={15} aria-label="График"><ChartIcon /></Push>
            </Totals>
            <Push $align="flex-start">
              <svg width="12" height="8" viewBox="0 0 12 8"><path d="m3 1 6 6M9 1 3 7" stroke="#2f6f9f" strokeWidth="2" /></svg>
              <ExitText>Выход</ExitText>
            </Push>
          </Side>

          <Center>
            <SearchPanel>
              <SearchSet $grow={457}>
                <legend>Поиск по автомобилю</legend>
                <Field $fill={c.yellow}><FieldInput aria-label="Поиск по автомобилю" /><FieldButton>×</FieldButton></Field>
              </SearchSet>
              <SearchSet $grow={447}>
                <legend>Поиск по контрагенту \ по штрихкоду</legend>
                <Line>
                  <Field $fill={c.yellow}><FieldInput aria-label="Поиск по контрагенту" /><FieldButton>×</FieldButton></Field>
                  <PlainPush $w={16} aria-label="Найти"><Lens /></PlainPush>
                </Line>
              </SearchSet>
            </SearchPanel>
            <ActionRow>
              <Actions>
                {actions.map(([name, icon]) => <IconButton key={name} aria-label={name}>{icon}</IconButton>)}
              </Actions>
              <BulbButton aria-label="Подсказка"><Bulb /></BulbButton>
            </ActionRow>
            <Tabs $top={6}>
              <Tab $big>
                <svg width="9" height="9" viewBox="0 0 9 9"><path d="M3 .5H1.500v3l-1 1 1 1v3H3M6 .5h1.500v3l1 1-1 1v3H6" fill="none" stroke="#7e9bb3" /></svg>
                Все
              </Tab>
              <Tab $big $active>Автосервис 1</Tab>
            </Tabs>
            <Board>
              <Filters>
                <Choice><Radio type="radio" name="view" defaultChecked />Подразделения</Choice>
                <Choice><Radio type="radio" name="view" />Сотрудники</Choice>
                <Choice><Radio type="radio" name="view" />Исполнители</Choice>
                <FindLabel htmlFor="order">Поиск по заказ-наряду:</FindLabel>
                <Field><FieldInput id="order" /><FieldButton>...</FieldButton><FieldButton>×</FieldButton></Field>
                <ArrowPair>
                  <Push $h={13} $w={30} aria-label="Назад"><BigArrow /></Push>
                  <Push $h={13} $w={31} aria-label="Вперёд"><BigArrow flip /></Push>
                </ArrowPair>
              </Filters>
              <Viewport>
                <Sheet><Schedule /><SheetTail /></Sheet>
                <VBar><Stepper aria-label="Вверх"><Tri d="up" fill="#c9c4b0" /></Stepper><Thumb /><span /><Stepper aria-label="Вниз"><Tri /></Stepper></VBar>
                <HBar><Stepper aria-label="Влево"><Tri d="left" fill="#c9c4b0" /></Stepper><Thumb /><span /><Stepper aria-label="Вправо"><Tri d="right" /></Stepper></HBar>
              </Viewport>
              <Legend>
                {legend.map(([t, tone]) => <LegendItem key={t} $tone={tone}>{t}</LegendItem>)}
                <LegendItem $tone="#fffdf8" $found>{"Найденный\nзаказ-наряд"}</LegendItem>
              </Legend>
            </Board>
            <Spread>
              <PlainPush $w={82} $align="flex-start">&lt;&lt; свернуть панель</PlainPush>
              <PlainPush $w={82} $align="flex-end">свернуть панель &gt;&gt;</PlainPush>
            </Spread>
          </Center>

          <Info>
            <Line>
              <Field $fill="#cbfdcb" $h={13}>
                <FieldInput aria-label="Подразделение" defaultValue="Подразделение 1 - автосервис 1" /><FieldButton>...</FieldButton><FieldButton>×</FieldButton>
              </Field>
            </Line>
            <Gap $h={3} />
            <InfoRow><InfoKey>Дата:</InfoKey><InfoValue>19.10.2019 13:00:00</InfoValue></InfoRow>
            <InfoRow><InfoKey>№</InfoKey><InfoValue>00000029555</InfoValue><Attach /></InfoRow>
            <Line>
              <Field $h={15} $fill="#fffef8"><FieldInput $big aria-label="Состояние" defaultValue="В работе" /></Field>
              <Push $h={15} $w={25}>SMS</Push>
            </Line>
            <Gap $h={2} />
            <Line>
              <Field $fill="#fffc98" $h={13}><FieldInput aria-label="Вид ремонта" defaultValue="Аппаратура на топливном участке" /><FieldButton>...</FieldButton></Field>
            </Line>
            <InfoRow $h={15}><InfoKey>Закрыт:</InfoKey></InfoRow>
            <InfoRow><InfoKey>Клиент:</InfoKey><InfoValue><a href="#">ООО «ЛТ»</a></InfoValue><Attach /></InfoRow>
            <InfoRow><InfoKey>Конт. лицо:</InfoKey><InfoValue><a href="#">Юрий </a></InfoValue></InfoRow>
            <InfoRow><InfoKey>Телефон:</InfoKey><InfoValue><Handset /><a href="#">+3 (323) 353-34...</a></InfoValue><PlainPush $h={13} $w={13} aria-label="Найти номер"><Lens s={8} tone="#8a5a2a" /></PlainPush></InfoRow>
            <InfoHead>Автомобиль</InfoHead>
            <InfoRow><InfoKey>Гос. номер:</InfoKey><InfoValue><a href="#">333433-3434</a></InfoValue><Attach /></InfoRow>
            <InfoRow $h={12}><InfoKey>Произв-ль:</InfoKey><InfoValue>Zexel</InfoValue></InfoRow>
            <InfoRow $h={12}><InfoKey>Модель:</InfoKey><InfoValue>Тнвд рядный</InfoValue></InfoRow>
            <InfoRow $h={12} $small><InfoKey $small>Пробег:</InfoKey><InfoValue>1</InfoValue></InfoRow>
            <InfoHead>Взаиморасчеты</InfoHead>
            <Gap $h={3} />
            <InfoRow $small><InfoKey $small>Мы должны:</InfoKey><InfoValue><a href="#">4 500 руб.</a></InfoValue><PlainPush $h={11} $w={17} aria-label="Пересчитать"><Refresh /></PlainPush></InfoRow>
            <InfoRow $h={12} $small><span>По всем организациям:&nbsp;&nbsp; <Money $tone="#ee1c1c">4 500 руб.</Money></span></InfoRow>
            <InfoRow $h={12} $small><Money $tone="#1c1c9c">Баланс бонусов: 0 руб.</Money></InfoRow>
            <InfoRow $small><InfoValue>Отсрочка: 20 000 руб. - 5 дн.</InfoValue><PlainPush $h={11} $w={17} aria-label="Изменить"><Pencil /></PlainPush></InfoRow>
            <Sum>Сумма: 14 803,2 руб.</Sum>
            <Tabs $top={3}><Tab $active>События</Tab><Tab>Задачи</Tab></Tabs>
            <EventPanel>
              <EventView>
                <EventTable>
                  <thead><tr><th><SortHead>Д<Tri s={6} fill="#b3ad8c" /></SortHead></th><th>Содержание события</th></tr></thead>
                </EventTable>
                <EventBar>
                  <Stepper aria-label="Вверх"><Tri d="up" /></Stepper><span /><Thumb /><span /><Stepper aria-label="Вниз"><Tri /></Stepper>
                </EventBar>
              </EventView>
              <Choice><Check type="checkbox" />Показывать авт. события</Choice>
            </EventPanel>
            <Gap $h={2} />
            <Push>Посмотреть незаписанные авто</Push>
          </Info>
        </Work>
        <PhoneStrip>
          <PhoneTab>
            <svg width="9" height="8" viewBox="0 0 9 8"><path d="M0 1h9v3H7V3H2v1H0z" fill="#3d7fd0" /><path d="M2 4h5l1 4H1z" fill="#5c9ae0" /></svg>
            Панель телефонии для 1С
          </PhoneTab>
        </PhoneStrip>
      </Body>

      <WindowTabs>
        <WindowTab><AlarmIcon />Оповещение о задачах</WindowTab>
        <WindowTab $active><WindowIcon />Рабочее место мастера</WindowTab>
        <WindowTab><WindowIcon />Групповая обработка спра...</WindowTab>
      </WindowTabs>
      <Status>
        <StatusText>Для получения подсказки нажмите F1</StatusText>
        <StatusKey $off>CAP</StatusKey><StatusKey>NUM</StatusKey>
      </Status>
    </Shell>
  );
}
